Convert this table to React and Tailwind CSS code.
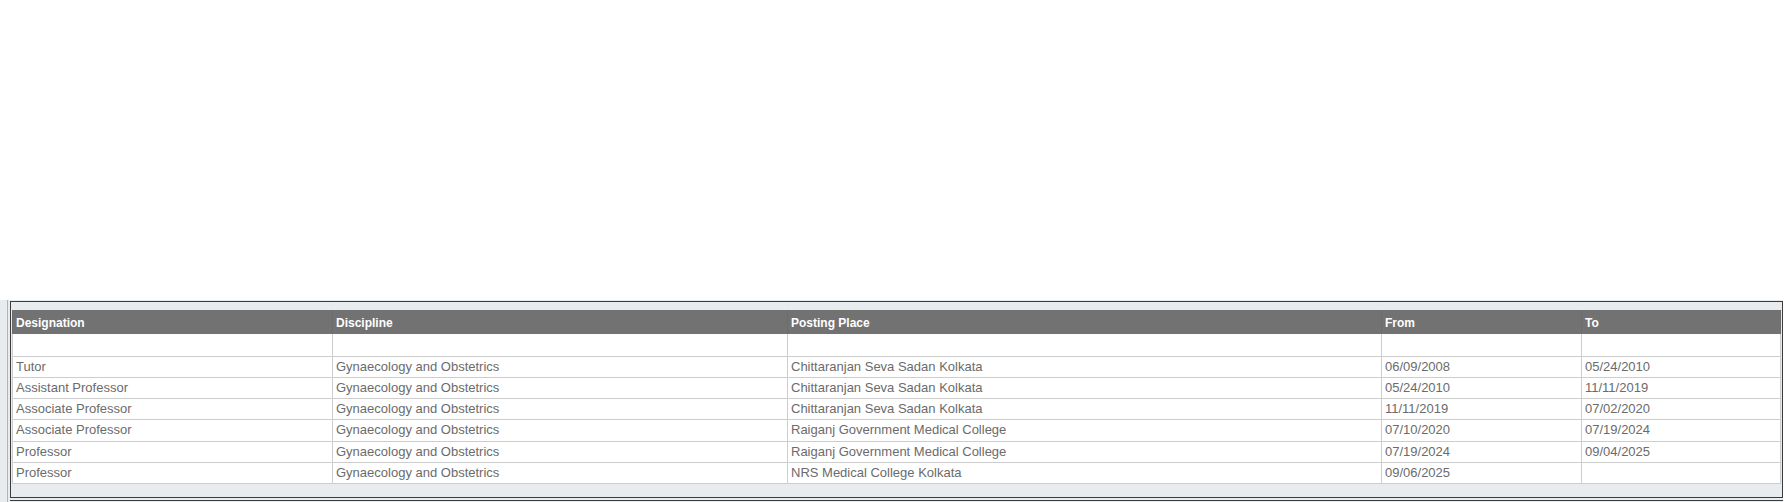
import React from 'react';

const rows = [
  ['Tutor', 'Gynaecology and Obstetrics', 'Chittaranjan Seva Sadan Kolkata', '06/09/2008', '05/24/2010'],
  ['Assistant Professor', 'Gynaecology and Obstetrics', 'Chittaranjan Seva Sadan Kolkata', '05/24/2010', '11/11/2019'],
  ['Associate Professor', 'Gynaecology and Obstetrics', 'Chittaranjan Seva Sadan Kolkata', '11/11/2019', '07/02/2020'],
  ['Associate Professor', 'Gynaecology and Obstetrics', 'Raiganj Government Medical College', '07/10/2020', '07/19/2024'],
  ['Professor', 'Gynaecology and Obstetrics', 'Raiganj Government Medical College', '07/19/2024', '09/04/2025'],
  ['Professor', 'Gynaecology and Obstetrics', 'NRS Medical College Kolkata', '09/06/2025', ''],
];

const columns = [
  { name: 'Designation', width: 'w-[320px]' },
  { name: 'Discipline', width: 'w-[455px]' },
  { name: 'Posting Place', width: 'w-[594px]' },
  { name: 'From', width: 'w-[200px]' },
  { name: 'To', width: 'w-[199px]' },
];

export default function App() {
  return (
    <div className="w-[1785px] h-[502px] overflow-hidden bg-white font-['Liberation_Sans',Arial,sans-serif]">
      <div className="h-[300px]" />
      <div className="flex h-[202px]">
        <div className="w-[7px] bg-[#e8ecef]" />
        <div className="w-[1776px] border-l border-[#b0b4b8] bg-[#e8ecef] pl-[2px] pt-[1px]">
          <div className="h-[197px] border border-[#3c3c3c] pl-[1px] pr-[1px] pt-[8px]">
            <table className="w-[1768px] table-fixed border-collapse text-left">
              <colgroup>
                {columns.map((c) => (
                  <col key={c.name} className={c.width} />
                ))}
              </colgroup>
              <thead>
                <tr className="h-[24px] bg-[#727272]">
                  {columns.map((c) => (
                    <th
                      key={c.name}
                      className="border-x border-[#6c6c6c] px-[3px] pt-[1px] align-middle text-[12px] font-bold text-white"
                    >
                      {c.name}
                    </th>
                  ))}
                </tr>
              </thead>
              <tbody className="text-[13px] text-[#6b6b6b]">
                <tr className="h-[22px] bg-white">
                  {columns.map((c) => (
                    <td key={c.name} className="border border-t-0 border-[#cdcdcd]" />
                  ))}
                </tr>
                {rows.map((r, i) => (
                  <tr key={i} className={i === 3 ? 'h-[22px] bg-white' : 'h-[21px] bg-white'}>
                    {r.map((cell, j) => (
                      <td
                        key={j}
                        className="border border-[#cdcdcd] px-[3px] py-0 leading-[20px] whitespace-nowrap"
                      >
                        {cell}
                      </td>
                    ))}
                  </tr>
                ))}
              </tbody>
            </table>
          </div>
          <div className="mt-[2px] h-[2px] border-t border-[#3c3c3c]" />
        </div>
      </div>
    </div>
  );
}
